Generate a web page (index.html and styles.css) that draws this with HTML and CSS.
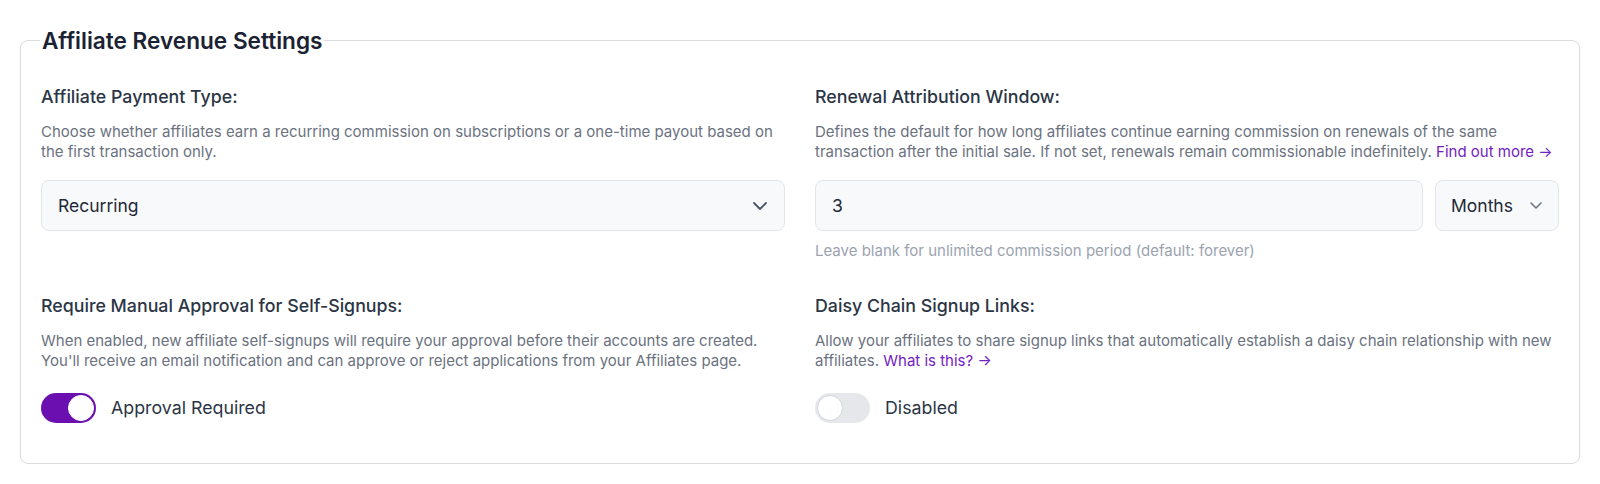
FILE: index.html
```html
<!DOCTYPE html>
<html lang="en">
<head>
<meta charset="utf-8">
<title>Affiliate Revenue Settings</title>
<link rel="stylesheet" href="styles.css">
</head>
<body>
<div class="page">
  <fieldset class="settings">
    <legend class="settings-title">Affiliate Revenue Settings</legend>
    <div class="settings-grid">
      <div class="field">
        <label class="field-label">Affiliate Payment Type:</label>
        <p class="field-desc">Choose whether affiliates earn a recurring commission on subscriptions or a one-time payout based on the first transaction only.</p>
        <div class="select select-wide">
          <span class="select-value">Recurring</span>
          <svg class="chev chev-dark" width="14" height="8" viewBox="0 0 14 8"><path d="M1 1l6 6 6-6" fill="none" stroke="currentColor" stroke-width="1.8" stroke-linecap="round" stroke-linejoin="round"/></svg>
        </div>
      </div>

      <div class="field">
        <label class="field-label">Renewal Attribution Window:</label>
        <p class="field-desc">Defines the default for how long affiliates continue earning commission on renewals of the same transaction after the initial sale. If not set, renewals remain commissionable indefinitely. <a class="link" href="#">Find out more →</a></p>
        <div class="input-row">
          <div class="text-input">3</div>
          <div class="select select-unit">
            <span class="select-value">Months</span>
            <svg class="chev chev-light" width="12" height="7" viewBox="0 0 12 7"><path d="M1 1l5 5 5-5" fill="none" stroke="currentColor" stroke-width="1.5" stroke-linecap="round" stroke-linejoin="round"/></svg>
          </div>
        </div>
        <p class="field-help">Leave blank for unlimited commission period (default: forever)</p>
      </div>

      <div class="field">
        <label class="field-label">Require Manual Approval for Self-Signups:</label>
        <p class="field-desc">When enabled, new affiliate self-signups will require your approval before their accounts are created. You'll receive an email notification and can approve or reject applications from your Affiliates page.</p>
        <div class="toggle-row">
          <span class="toggle is-on"><span class="knob"></span></span>
          <span class="toggle-label">Approval Required</span>
        </div>
      </div>

      <div class="field">
        <label class="field-label">Daisy Chain Signup Links:</label>
        <p class="field-desc">Allow your affiliates to share signup links that automatically establish a daisy chain relationship with new affiliates. <a class="link" href="#">What is this? →</a></p>
        <div class="toggle-row">
          <span class="toggle"><span class="knob"></span></span>
          <span class="toggle-label">Disabled</span>
        </div>
      </div>
    </div>
  </fieldset>
</div>
</body>
</html>
```

FILE: styles.css
```css
* { box-sizing: border-box; }

html, body {
  margin: 0;
  padding: 0;
  background: #ffffff;
}

body {
  font-family: Inter, "Noto Sans", "Liberation Sans", sans-serif;
  color: #1f2937;
}

.page {
  padding: 24px 20px 21px;
}

.settings {
  margin: 0;
  border: 1px solid #d8dbe0;
  border-radius: 8px;
  padding: 26px 20px 40px;
  min-width: 0;
}

.settings-title {
  font-size: 22.6px;
  line-height: 33px;
  font-weight: 600;
  color: #1a2233;
  padding: 0 2px;
  margin-left: -1px;
}

.settings-grid {
  display: grid;
  grid-template-columns: 1fr 1fr;
  column-gap: 30px;
  row-gap: 31px;
}

.field {
  display: flex;
  flex-direction: column;
  min-width: 0;
}

.field-label {
  font-size: 17.8px;
  line-height: 28px;
  font-weight: 450;
  color: #2b3545;
}

.field-desc {
  margin: 11px 0 0;
  font-size: 15px;
  line-height: 19.6px;
  color: #6b7280;
}

.link {
  color: #7322c2;
  text-decoration: none;
}

.select,
.text-input {
  height: 51px;
  background: #f8f9fb;
  border: 1px solid #e3e5e9;
  border-radius: 8px;
  font-size: 17.5px;
  color: #1f2937;
  display: flex;
  align-items: center;
}

.select-wide {
  margin-top: 19px;
  padding: 0 17px 0 16px;
  justify-content: space-between;
}

.select-value { line-height: 1; }

.chev-dark { color: #4b5563; }
.chev-light { color: #6b7280; }

.input-row {
  margin-top: 19px;
  display: flex;
  gap: 12px;
}

.text-input {
  flex: 1;
  padding: 0 16px;
}

.select-unit {
  width: 124px;
  padding: 0 16px 0 15px;
  justify-content: space-between;
}

.field-help {
  margin: 10px 0 0;
  font-size: 15px;
  line-height: 20px;
  color: #9ca3af;
}

.toggle-row {
  margin-top: 23px;
  display: flex;
  align-items: center;
  gap: 15px;
}

.toggle {
  position: relative;
  width: 55px;
  height: 30px;
  border-radius: 15px;
  background: #e5e7eb;
  flex: none;
}

.toggle .knob {
  position: absolute;
  top: 2px;
  left: 2px;
  width: 26px;
  height: 26px;
  border-radius: 50%;
  background: #ffffff;
  border: 1px solid #d1d5db;
}

.toggle.is-on {
  background: #6b0fb0;
}

.toggle.is-on .knob {
  left: auto;
  right: 2px;
  border-color: #ffffff;
}

.toggle-label {
  font-size: 17.8px;
  line-height: 28px;
  color: #2b3545;
}
```
